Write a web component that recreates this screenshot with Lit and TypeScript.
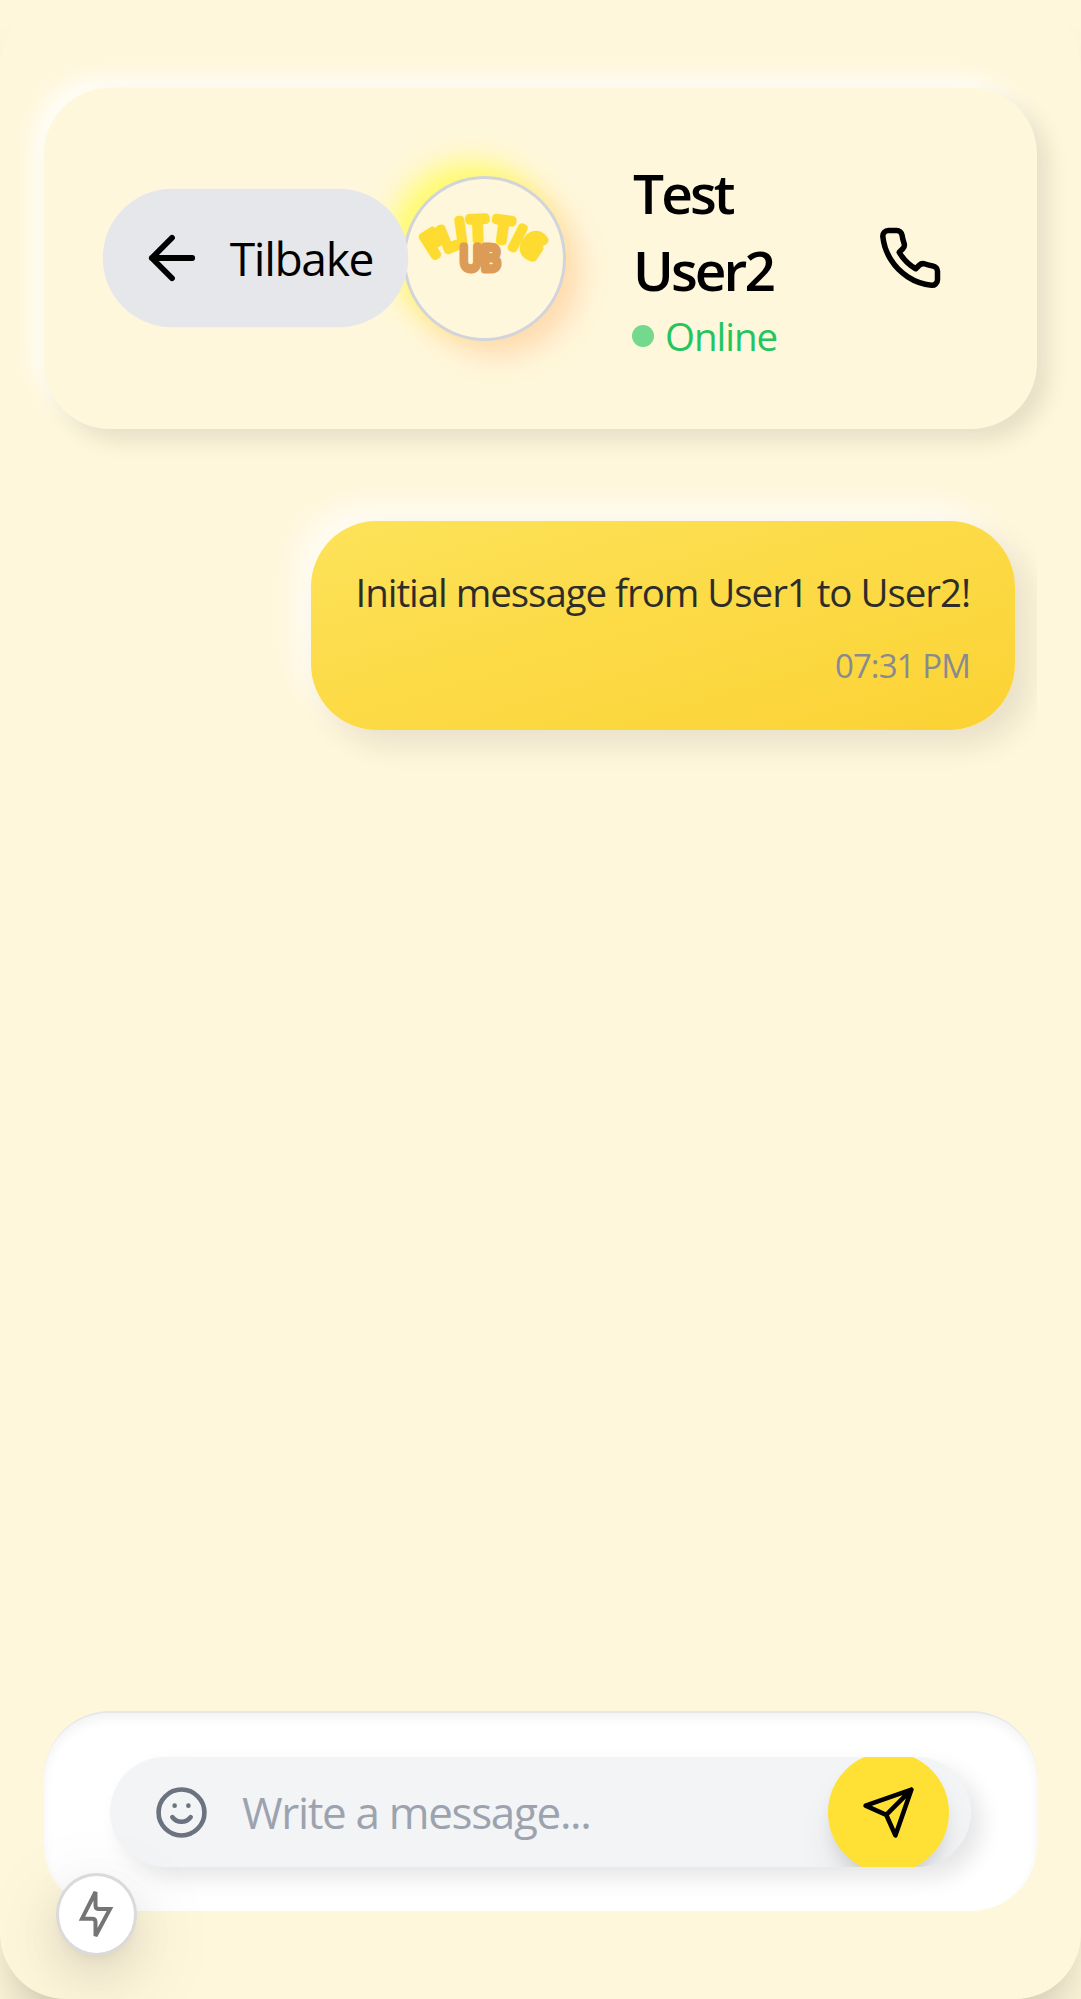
import { LitElement, html, css, svg } from "lit";
import { customElement } from "lit/decorators.js";

const icon = (cls: string, body: unknown) => html`
  <svg class=${cls} viewBox="0 0 24 24" fill="none" stroke="currentColor" stroke-width="2" stroke-linecap="round" stroke-linejoin="round">${body}</svg>`;

const arrowLeft = svg`<path d="M12 19l-7-7 7-7M19 12H5"/>`;
const phone = svg`<path d="M22 16.92v3a2 2 0 0 1-2.18 2 19.79 19.79 0 0 1-8.63-3.07 19.5 19.5 0 0 1-6-6 19.79 19.79 0 0 1-3.07-8.67A2 2 0 0 1 4.11 2h3a2 2 0 0 1 2 1.72 12.84 12.84 0 0 0 .7 2.81 2 2 0 0 1-.45 2.11L8.09 9.91a16 16 0 0 0 6 6l1.27-1.27a2 2 0 0 1 2.11-.45 12.84 12.84 0 0 0 2.81.7A2 2 0 0 1 22 16.92z"/>`;
const smile = svg`<circle cx="12" cy="12" r="10"/><path d="M8 14s1.5 2 4 2 4-2 4-2M9 9h.01M15 9h.01"/>`;
const send = svg`<path d="M22 2 11 13M22 2l-7 20-4-9-9-4z"/>`;

// Letters of the badge: glyph, centre x, centre y, rotation in degrees, horizontal scale.
const arc: [string, number, number, number, number][] = [
  ["F", 27, 65, -33, 0.95],
  ["L", 42, 59, -22, 0.9],
  ["I", 55, 52, -8, 0.9],
  ["T", 72, 50, -2, 0.98],
  ["T", 97, 51, 8, 0.98],
  ["I", 112, 59, 27, 0.9],
  ["G", 127, 66, 34, 0.85],
];

@customElement("app-root")
export class AppRoot extends LitElement {
  static styles = css`
    :host { display: block; background: #fff7db; font-family: "Open Sans", "Noto Sans", sans-serif; color: #000; }
    * { box-sizing: border-box; }
    svg { display: block; flex: none; }
    .page { height: 1999px; overflow: hidden; position: relative; }
    .shell {
      height: 1999px; padding: 88px 44px; border-radius: 66px; background: #fff7db;
      display: flex; flex-direction: column;
      box-shadow: 0 50px 66px -11px rgba(0,0,0,.11), 0 20px 27.5px -13px rgba(0,0,0,.11);
    }
    .header {
      display: flex; align-items: center; height: 341px; flex: none; padding: 0 94px 0 66px;
      border-radius: 66px; background: #fff7db;
      box-shadow: 11px 11px 22px rgba(0,0,0,.1), -11px -11px 22px rgba(255,255,255,.8);
    }
    .back {
      position: relative; z-index: 1; display: flex; align-items: center; gap: 22px;
      width: 291px; height: 132px; margin-bottom: 1px; padding: 0 0 0 33px; border-radius: 66px;
      background: #e5e7eb; font-size: 44px; white-space: nowrap; transform: scale(1.05); flex: none;
    }
    .back span { letter-spacing: -1.3px; }
    .i24 { width: 66px; height: 66px; }
    .i20 { width: 55px; height: 55px; }
    .avatar {
      width: 163px; height: 165px; margin-left: 2px; flex: none; border-radius: 50%;
      border: 3px solid #d1d5db; background: #fff7db;
      box-shadow: 14px 14px 28px rgba(255,160,90,.32), -14px -14px 28px rgba(255,255,60,.68);
    }
    .avatar svg { width: 156px; height: 159px; }
    .arc, .ub { font-family: "Open Sans", sans-serif; font-weight: 500; text-anchor: middle; stroke-linejoin: round; stroke-linecap: round; }
    .arc { font-size: 31px; fill: #fedb30; stroke: #fedb30; stroke-width: 8.5; }
    .ub { font-size: 33px; fill: #dd9c56; stroke: #dd9c56; stroke-width: 7; }
    .who { margin-left: 66px; width: 160px; flex: none; }
    .name { padding: 0 0 0 1px; font-size: 55px; line-height: 77px; font-weight: 560; letter-spacing: -2.9px; }
    .status { display: flex; align-items: center; gap: 11px; height: 55px; font-size: 38.5px; letter-spacing: -1px; color: #22c55e; }
    .dot { width: 22px; height: 22px; border-radius: 50%; background: #73d98d; }
    .call { margin: 0 0 1px auto; }
    .log { flex: 1; min-height: 0; overflow: hidden; margin-top: 22px; padding: 70.3px 22px 0 30px; display: flex; flex-direction: column; align-items: flex-end; }
    .bubble {
      width: 704px; height: 209px; padding: 43px 45px 0 43px; border-radius: 66px; opacity: .9; text-align: right;
      background: linear-gradient(to bottom right, #fde04b, #fbcf22);
      box-shadow: 14px 14px 30px rgba(0,0,0,.1), -15px -15px 32px rgba(255,255,255,.8);
    }
    .text { font-size: 38.5px; line-height: 56px; letter-spacing: -1.06px; color: #171717; white-space: nowrap; }
    .time { margin-top: 23.5px; font-size: 33px; line-height: 44px; letter-spacing: -.9px; color: #7b808a; }
    .footer {
      height: 200px; flex: none; padding: 44px 66px 0; border-radius: 66px; background: #fff;
      border-top: 2px solid #e5e7eb; box-shadow: inset 0 5.5px 11px rgba(0,0,0,.05);
    }
    .input {
      display: flex; align-items: center; height: 110px; padding: 0 22px 0 44px; overflow: hidden;
      border-radius: 55px; background: #f3f4f6; color: #6b7280;
      box-shadow: 11px 11px 22px rgba(0,0,0,.1), -11px -11px 22px rgba(255,255,255,.8);
    }
    .hint { margin-left: 33px; flex: 1; font-size: 44px; letter-spacing: -1.33px; color: #9ca3af; white-space: nowrap; }
    .send {
      width: 121px; height: 121px; border-radius: 50%; background: #ffe135; color: #000; flex: none;
      display: flex; align-items: center; justify-content: center;
      box-shadow: 0 27.5px 41px -8px rgba(0,0,0,.1), 0 11px 16.5px -5.5px rgba(0,0,0,.1);
    }
    .fab {
      position: absolute; left: 55.5px; top: 1873px; width: 81.5px; height: 82.5px; border-radius: 50%;
      background: #fff; border: 3px solid #dadada; color: #757575;
      display: flex; align-items: center; justify-content: center;
      box-shadow: 0 16.5px 44px rgba(0,0,0,.08), 0 8px 16.5px -11px rgba(0,0,0,.12), 0 24.75px 77px 22px rgba(0,0,0,.05);
    }
    .bolt { width: 36px; height: 46px; }
  `;

  render() {
    return html`
      <div class="page">
        <div class="shell">
          <div class="header">
            <div class="back">${icon("i24", arrowLeft)}<span>Tilbake</span></div>
            <div class="avatar">
              <svg viewBox="0 0 156 159">
                ${arc.map(([c, x, y, r, s]) => svg`<text class="arc" y="11" transform="translate(${x} ${y}) rotate(${r}) scale(${s} 1)">${c}</text>`)}
                <text class="ub" x="74" y="91" textLength="40" lengthAdjust="spacingAndGlyphs">UB</text>
              </svg>
            </div>
            <div class="who">
              <div class="name">Test User2</div>
              <div class="status"><i class="dot"></i>Online</div>
            </div>
            <div class="call">${icon("i24", phone)}</div>
          </div>
          <div class="log">
            <div class="bubble">
              <div class="text">Initial message from User1 to User2!</div>
              <div class="time">07:31 PM</div>
            </div>
          </div>
          <div class="footer">
            <div class="input">
              ${icon("i20", smile)}
              <div class="hint">Write a message...</div>
              <div class="send">${icon("i20", send)}</div>
            </div>
          </div>
        </div>
        <div class="fab">
          <svg class="bolt" viewBox="0 0 36 46" fill="none" stroke="currentColor" stroke-width="4">
            <path d="M17.5 1v13.5q0 3.5 3.5 3.5h11L17.5 45V31q0-3.3-3.5-3.3H4z"/>
          </svg>
        </div>
      </div>
    `;
  }
}
